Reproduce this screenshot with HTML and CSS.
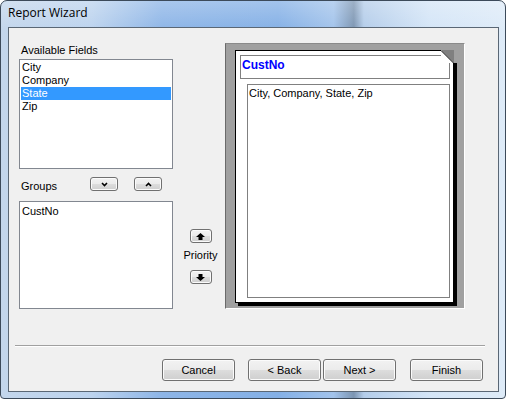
FILE: index.html
```html
<!DOCTYPE html>
<html lang="en">

<head>
  <meta charset="utf8">
  <title>Report Wizard</title>
  <link rel="stylesheet" href="styles.css">
</head>

<body>
  <div class="window">
    <div class="titlebar">Report Wizard</div>
    <div class="client">
      <div class="main">
        <div class="fields">
          <div class="label">Available Fields</div>
          <ul class="listbox available">
            <li>City</li>
            <li>Company</li>
            <li class="selected">State</li>
            <li>Zip</li>
          </ul>
          <div class="group-row">
            <span class="label">Groups</span>
            <button class="btn mini">
              <svg width="7" height="5" viewBox="0 0 7 5"><polyline points="1,1 3.5,3.5 6,1" fill="none" stroke="#000" stroke-width="1.6"/></svg>
            </button>
            <button class="btn mini">
              <svg width="7" height="5" viewBox="0 0 7 5"><polyline points="1,4 3.5,1.5 6,4" fill="none" stroke="#000" stroke-width="1.6"/></svg>
            </button>
          </div>
          <ul class="listbox groups">
            <li>CustNo</li>
          </ul>
        </div>

        <div class="priority">
          <button class="btn arrow">
            <svg width="9" height="7" viewBox="0 0 9 7"><polygon points="4.5,0 9,4 6.5,4 6.5,7 2.5,7 2.5,4 0,4" fill="#000"/></svg>
          </button>
          <span class="label">Priority</span>
          <button class="btn arrow">
            <svg width="9" height="7" viewBox="0 0 9 7"><polygon points="2.5,0 6.5,0 6.5,3 9,3 4.5,7 0,3 2.5,3" fill="#000"/></svg>
          </button>
        </div>

        <div class="preview">
          <div class="page">
            <svg class="fold" width="16" height="13" viewBox="0 0 16 13">
              <rect width="16" height="13" fill="#a0a0a0"/>
              <polygon points="0,0 13,0 13,13" fill="#808080"/>
              <polygon points="0,0 13,13 0,13" fill="#fff"/>
              <line x1="0" y1="0.5" x2="12.5" y2="13" stroke="#000" stroke-width="1"/>
            </svg>
            <div class="page-head">CustNo</div>
            <div class="page-body">City, Company, State, Zip</div>
          </div>
        </div>
      </div>

      <div class="separator"></div>

      <div class="actions">
        <button class="btn push">Cancel</button>
        <button class="btn push back">&lt; Back</button>
        <button class="btn push next">Next &gt;</button>
        <button class="btn push finish">Finish</button>
      </div>
    </div>
  </div>
</body>

</html>
```

FILE: styles.css
```css
html,
body {
  margin: 0;
  height: 100%;
}

body {
  font-family: 'Liberation Sans', Arial, sans-serif;
  font-size: 11px;
  color: #000;
  background: #fff;
}

.window {
  width: 506px;
  height: 399px;
  box-sizing: border-box;
  border: 1px solid #3c4a5a;
  border-radius: 7px 7px 4px 4px;
  background:
    linear-gradient(180deg, rgba(255, 255, 255, 0.25) 0, rgba(255, 255, 255, 0) 30px),
    linear-gradient(90deg, #c3d6ec 0, #bcd3ee 18%, #8db5e7 32%, #84b0e6 55%, #a2c3eb 66%, #7c95b2 70%, #b4cdea 72%, #d4e5f7 85%, #deebf8 100%);
  overflow: hidden;
}

.titlebar {
  height: 26px;
  box-sizing: border-box;
  padding: 4px 0 0 7px;
  font-family: 'Open Sans', 'Liberation Sans', sans-serif;
  font-size: 12px;
  line-height: 16px;
  color: #000;
}

.client {
  margin: 0 6px 0 7px;
  height: 365px;
  box-sizing: border-box;
  border: 1px solid #5a6775;
  background: #f0f0f0;
  padding-top: 15px;
}

.main {
  display: flex;
  height: 266px;
  padding-left: 10px;
}

.label {
  display: block;
  line-height: 13px;
  white-space: nowrap;
}

.fields {
  width: 154px;
  padding-top: 1px;
}

.fields > .label {
  margin-bottom: 2px;
  padding-left: 2px;
}

.listbox {
  list-style: none;
  margin: 0;
  padding: 1px 0 0;
  box-sizing: border-box;
  border: 1px solid #828790;
  background: #fff;
}

.listbox li {
  height: 13px;
  line-height: 13px;
  margin: 0 1px;
  padding-left: 1px;
}

.listbox li.selected {
  background: #3399ff;
  color: #fff;
}

.available {
  height: 110px;
}

.groups {
  height: 108px;
  margin-top: 10px;
  padding-top: 3px;
}

.group-row {
  display: flex;
  align-items: flex-start;
  margin-top: 8px;
  height: 14px;
}

.group-row .label {
  width: 69px;
  margin-top: 3px;
  padding-left: 2px;
}

.group-row .mini + .mini {
  margin-left: 16px;
}

.btn {
  box-sizing: border-box;
  border: 1px solid #707070;
  border-radius: 3px;
  background: linear-gradient(180deg, #f2f2f2 0, #ebebeb 50%, #dddddd 50%, #cfcfcf 100%);
  box-shadow: inset 0 0 0 1px #fbfbfb;
  padding: 0;
  margin: 0;
  font-family: 'Liberation Sans', Arial, sans-serif;
  font-size: 11px;
  color: #000;
  display: flex;
  align-items: center;
  justify-content: center;
}

.mini {
  width: 28px;
  height: 14px;
}

.priority {
  width: 52px;
  display: flex;
  flex-direction: column;
  align-items: center;
  padding-top: 186px;
  padding-left: 3px;
  box-sizing: border-box;
}

.arrow {
  width: 22px;
  height: 14px;
}

.priority .label {
  margin-top: 6px;
  margin-bottom: 8px;
}

.preview {
  width: 240px;
  height: 266px;
  box-sizing: border-box;
  border: 1px solid;
  border-color: #8a8a8a #fff #fff #6a6a6a;
  background: #a0a0a0;
  padding: 6px 0 0 9px;
}

.page {
  position: relative;
  width: 219px;
  height: 253px;
  box-sizing: border-box;
  border: 1px solid #000;
  background: #fff;
  box-shadow: 3px 3px 0 #000;
  padding: 4px 0 0 4px;
}

.fold {
  position: absolute;
  top: -1px;
  right: -4px;
  display: block;
}

.page-head {
  width: 210px;
  height: 24px;
  box-sizing: border-box;
  border: 1px solid #808080;
  padding: 2px 0 0 1px;
  font-weight: bold;
  font-size: 12px;
  line-height: 14px;
  color: #0000ff;
}

.page-body {
  width: 203px;
  height: 214px;
  box-sizing: border-box;
  margin: 5px 0 0 7px;
  border: 1px solid #808080;
  padding: 2px 0 0 1px;
  line-height: 13px;
}

.separator {
  margin: 36px 13px 0 6px;
  border-top: 1px solid #a0a0a0;
  border-bottom: 1px solid #fff;
  height: 0;
}

.actions {
  display: flex;
  justify-content: flex-end;
  margin-top: 12px;
  padding-right: 15px;
}

.push {
  width: 73px;
  height: 22px;
}

.back {
  margin-left: 13px;
}

.next {
  margin-left: 2px;
}

.finish {
  margin-left: 14px;
}
```
